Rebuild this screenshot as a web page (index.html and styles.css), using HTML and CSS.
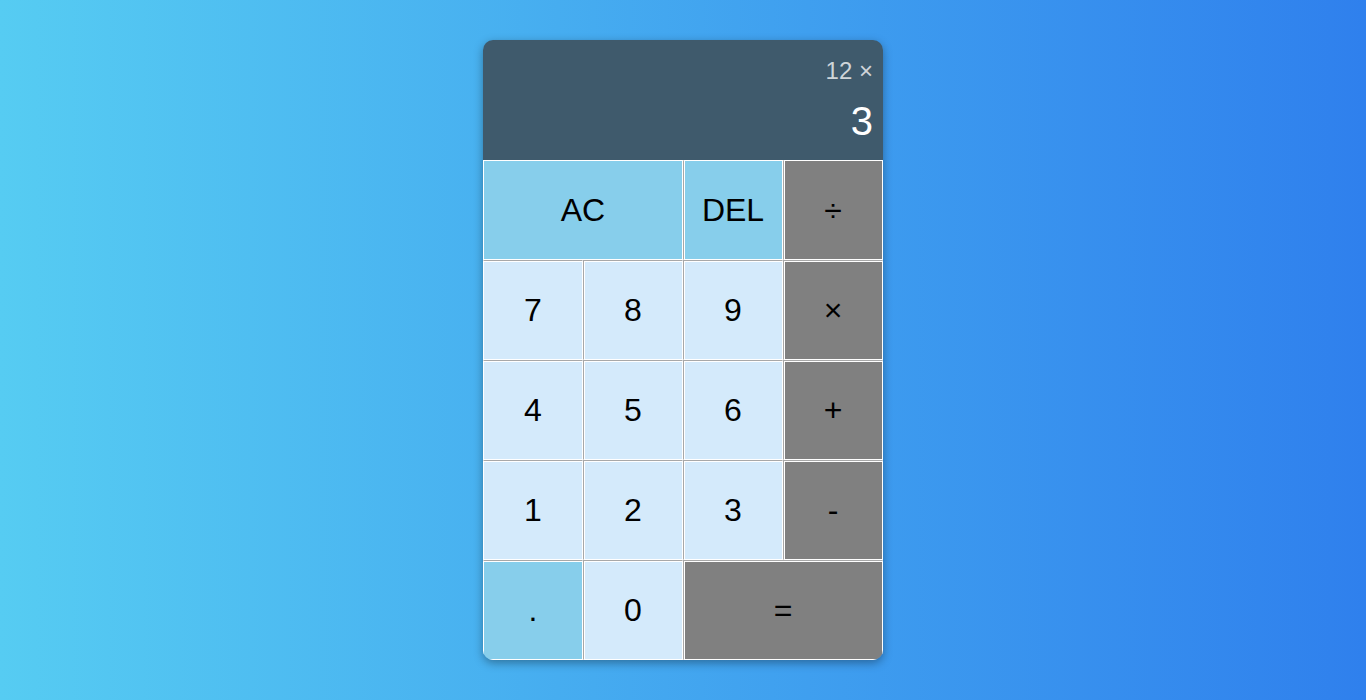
FILE: index.html
```html
<!DOCTYPE html>
<html>
<head>
<meta charset="utf-8">
<link rel="stylesheet" href="styles.css">
</head>
<body>
<div class="calculator">
  <div class="output">
    <div class="previous">12 ×</div>
    <div class="current">3</div>
  </div>
  <button class="btn span-two accent first top">AC</button>
  <button class="btn accent top">DEL</button>
  <button class="btn op top">÷</button>
  <button class="btn first">7</button>
  <button class="btn">8</button>
  <button class="btn">9</button>
  <button class="btn op">×</button>
  <button class="btn first">4</button>
  <button class="btn">5</button>
  <button class="btn">6</button>
  <button class="btn op">+</button>
  <button class="btn first">1</button>
  <button class="btn">2</button>
  <button class="btn">3</button>
  <button class="btn op">-</button>
  <button class="btn accent first">.</button>
  <button class="btn">0</button>
  <button class="btn span-two op">=</button>
</div>
</body>
</html>
```
FILE: styles.css
```css
* { box-sizing: border-box; }
body {
  margin: 0;
  min-height: 100vh;
  background: linear-gradient(to right, #56ccf2, #2f80ed);
  font-family: "Liberation Sans", Arial, sans-serif;
  display: flex;
  align-items: center;
  justify-content: center;
}
.calculator {
  display: grid;
  width: 400px;
  grid-template-columns: repeat(4, 100px);
  grid-template-rows: 120px repeat(5, 100px);
  border-radius: 10px;
  overflow: hidden;
  box-shadow: 0 3px 10px rgba(0,0,0,0.35);
}
.output {
  grid-column: 1 / -1;
  background: #3f5a6c;
  display: flex;
  flex-direction: column;
  align-items: flex-end;
  justify-content: space-around;
  padding: 10px 10px 9px;
}
.previous { color: rgba(255,255,255,0.75); font-size: 24px; }
.current { color: #fff; font-size: 40px; }
.btn {
  font-family: inherit;
  font-size: 32px;
  outline: none;
  background: #d4eafb;
  color: #000;
  cursor: pointer;
  padding: 0;
  border-style: solid;
  border-width: 1px;
  border-color: #a8a8a8 #fff #fff #a8a8a8;
  box-shadow: inset 1px 1px 0 #fff;
}
.btn.first { border-left-color: #fff; box-shadow: inset 0 1px 0 #fff; }
.btn.top { border-top-color: #fff; box-shadow: inset 1px 0 0 #fff; }
.btn.first.top { box-shadow: none; }
.accent { background: #87ceeb; }
.op { background: #808080; }
.span-two { grid-column: span 2; }
```
